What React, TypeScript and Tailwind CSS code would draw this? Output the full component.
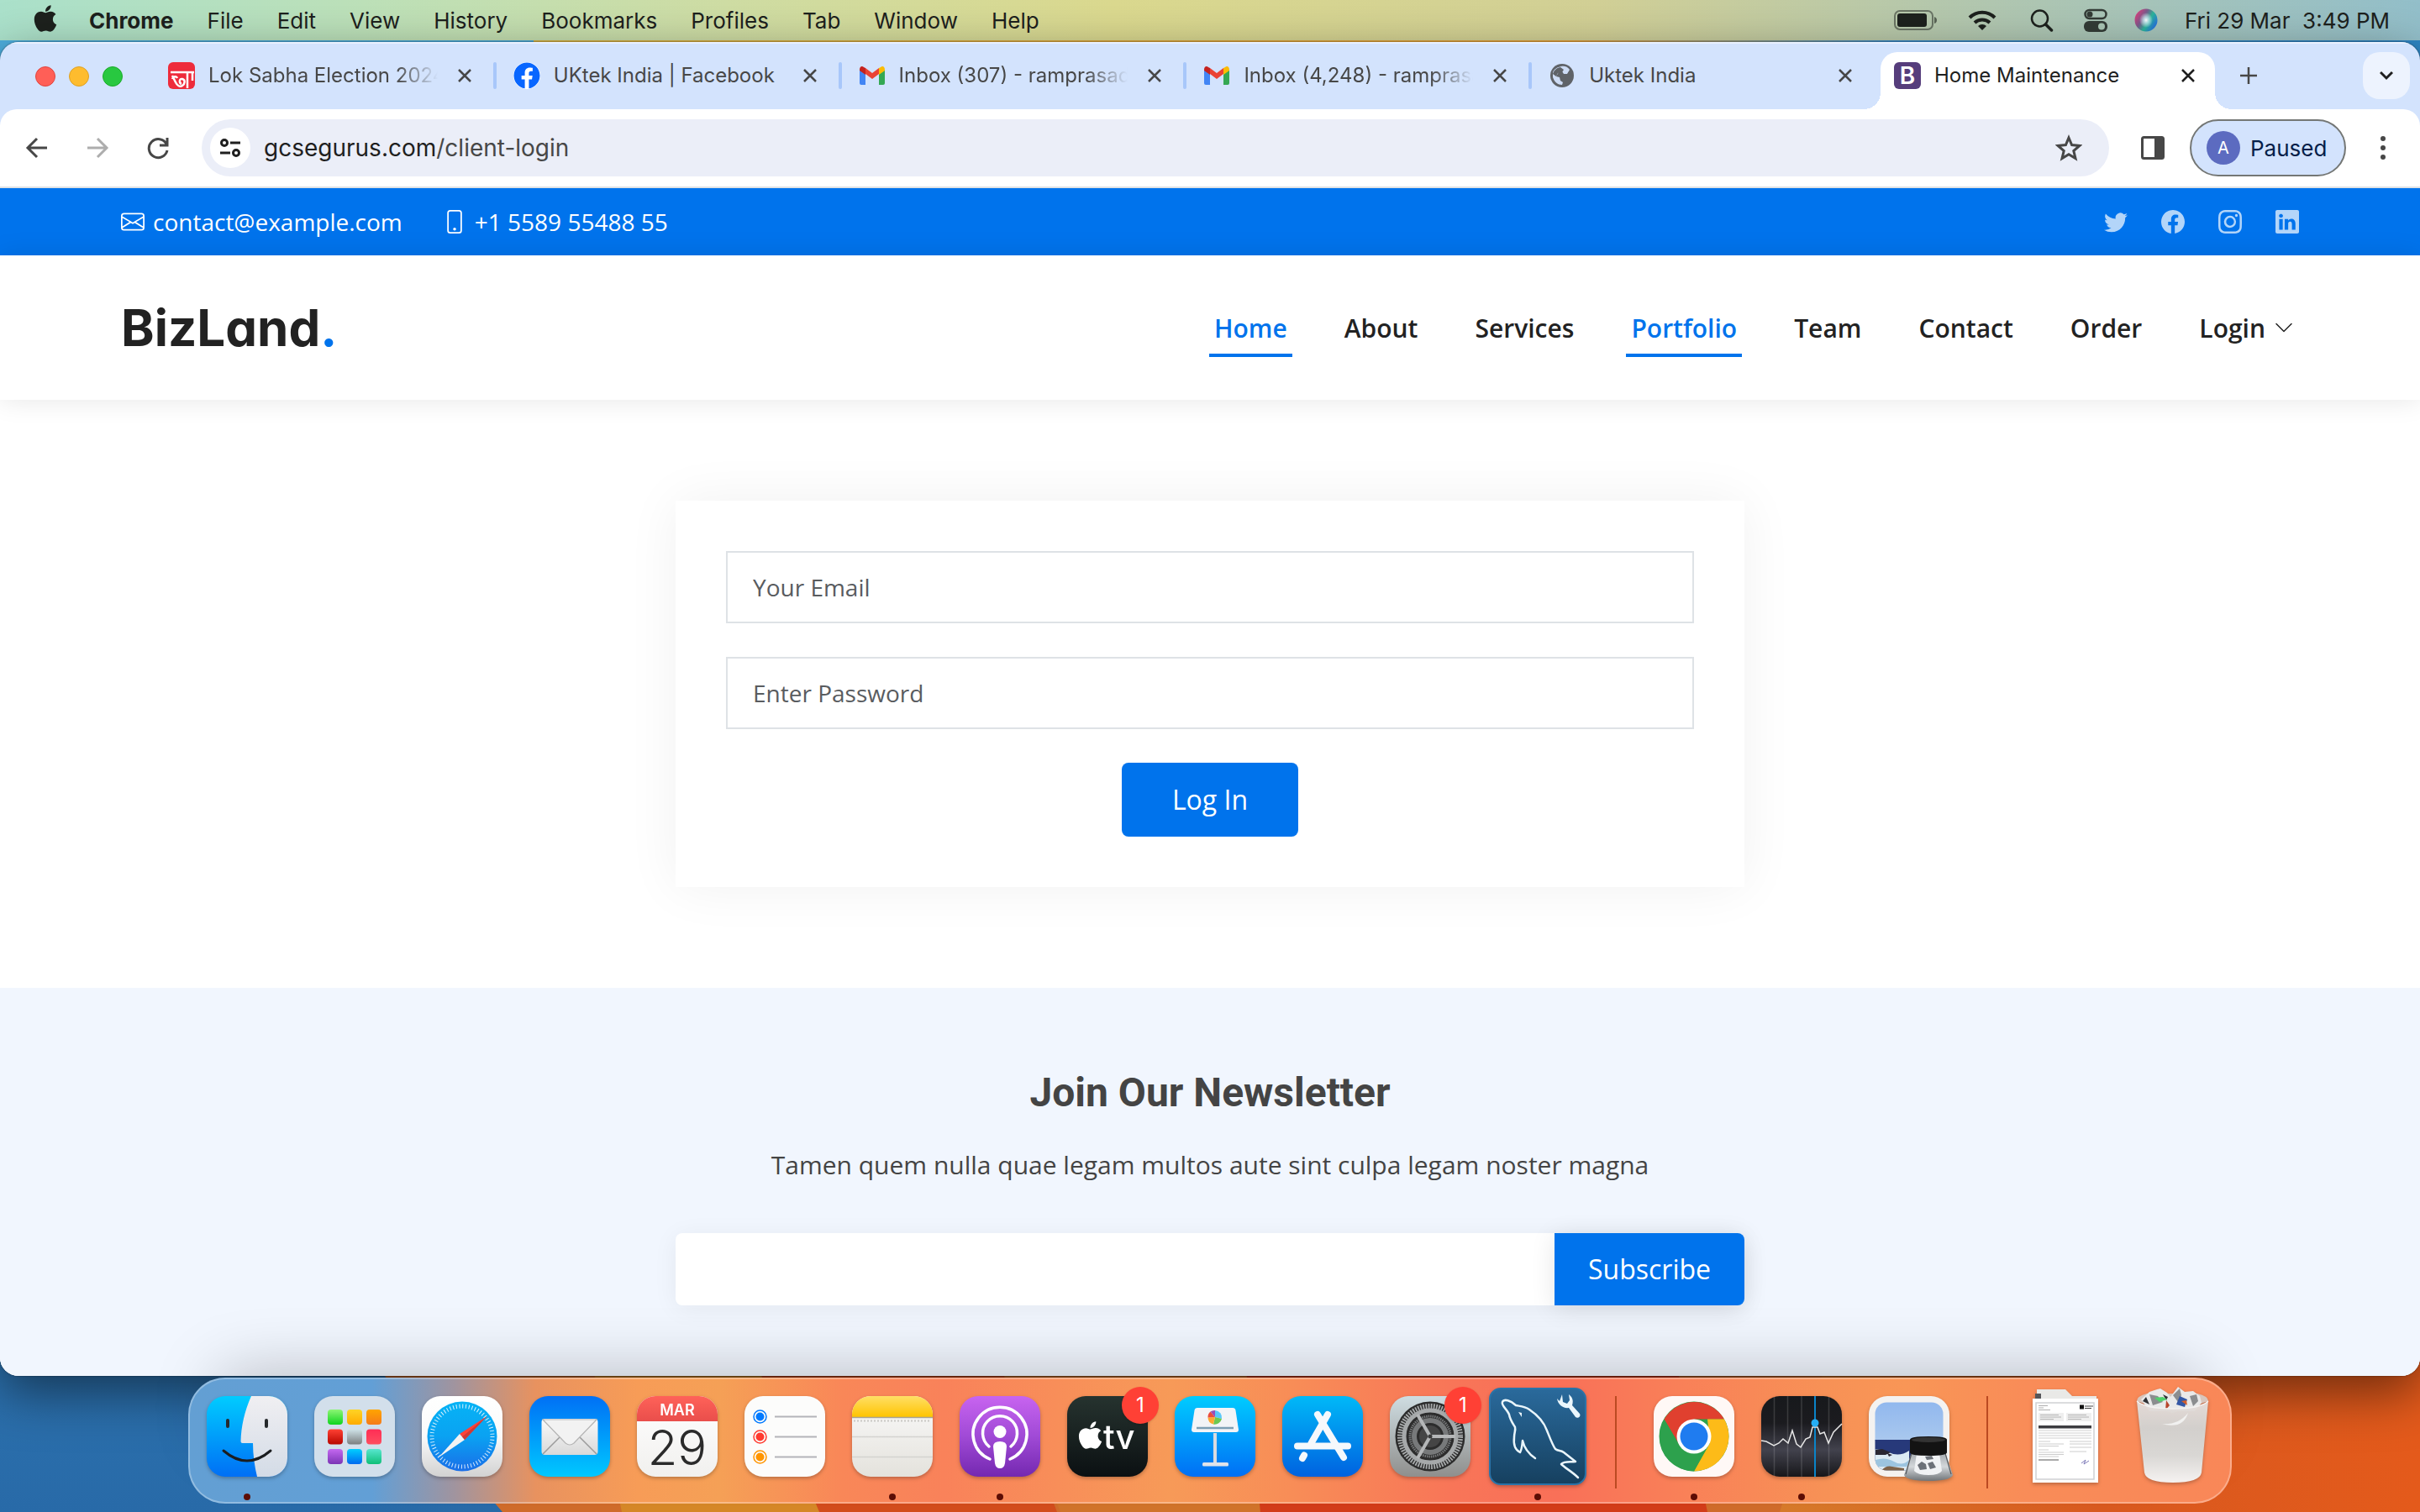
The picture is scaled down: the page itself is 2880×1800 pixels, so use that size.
import type { ReactNode } from "react";
import {
  BsChevronDown,
  BsEnvelope,
  BsFacebook,
  BsInstagram,
  BsLinkedin,
  BsPhone,
  BsTwitter,
} from "react-icons/bs";
import { FaApple, FaFacebook } from "react-icons/fa";

const menuItems = ["File", "Edit", "View", "History", "Bookmarks", "Profiles", "Tab", "Window", "Help"];

/* ---------- Wallpaper ---------- */

function Wallpaper() {
  return (
    <svg
      className="absolute inset-0 h-full w-full"
      viewBox="0 0 2880 1800"
      preserveAspectRatio="none"
      aria-hidden="true"
    >
      <defs>
        <linearGradient id="wpBlue" x1="0" y1="0" x2="0" y2="1">
          <stop offset="0" stopColor="#4fb0df" />
          <stop offset="1" stopColor="#286aa8" />
        </linearGradient>
        <linearGradient id="wpTop" x1="0" y1="0" x2="1" y2="0">
          <stop offset="0" stopColor="#d9b545" />
          <stop offset="0.55" stopColor="#e8a33a" />
          <stop offset="0.72" stopColor="#3f8fcb" />
          <stop offset="1" stopColor="#2f86c4" />
        </linearGradient>
        <linearGradient id="wpRight" x1="0" y1="0" x2="1" y2="0">
          <stop offset="0" stopColor="#d67a2a" />
          <stop offset="0.5" stopColor="#d8591f" />
          <stop offset="1" stopColor="#e45a1b" />
        </linearGradient>
      </defs>
      <rect width="2880" height="1800" fill="url(#wpBlue)" />
      <rect x="635" y="0" width="2245" height="400" fill="url(#wpTop)" />
      <polygon points="425,1600 2880,1600 2880,1800 598,1800" fill="#cf6b2a" />
      <polygon points="890,1600 1180,1600 1258,1800 975,1800" fill="#d24c1c" />
      <polygon points="700,1600 890,1600 975,1800 740,1800" fill="#d58727" />
      <polygon points="1180,1600 1480,1600 1500,1800 1262,1800" fill="#d0732a" />
      <polygon points="1480,1600 1990,1600 2032,1800 1500,1800" fill="#d23c19" />
      <polygon points="2180,1600 2880,1600 2880,1800 2118,1800" fill="url(#wpRight)" />
    </svg>
  );
}

/* ---------- Menu bar ---------- */

function MenuBar() {
  return (
    <header className="relative flex h-12 items-center bg-[linear-gradient(90deg,#abe1cb_0%,#bde1b9_15%,#cfdda4_30%,#dbd98f_46%,#d2d096_66%,#b5c8ad_80%,#93bfca_100%)] pr-9 pl-9 text-[26px] text-[#1d211d]">
      <button aria-label="Apple menu" className="mb-1">
        <FaApple className="size-9" />
      </button>
      <nav className="ml-[34px] flex items-center gap-10">
        <button className="font-bold">Chrome</button>
        {menuItems.map((item) => (
          <button key={item}>{item}</button>
        ))}
      </nav>
      <div className="ml-auto flex items-center">
        <svg className="h-6 w-[52px]" viewBox="0 0 52 24" aria-label="Battery">
          <rect x="1" y="1" width="45" height="22" rx="6" fill="none" stroke="#1d211d" strokeOpacity="0.5" strokeWidth="2" />
          <rect x="4" y="4" width="35" height="16" rx="3" fill="#1d211d" />
          <path d="M48 8q3 1 3 4t-3 4z" fill="#1d211d" fillOpacity="0.6" />
        </svg>
        <svg className="ml-9 h-[26px] w-[34px]" viewBox="0 0 34 26" aria-label="Wi-Fi">
          <g fill="none" stroke="#1d211d" strokeWidth="4">
            <path d="M2 10a21 21 0 0 1 30 0" />
            <path d="M8 16a13 13 0 0 1 18 0" />
          </g>
          <path d="M17 25l-5-5a7 7 0 0 1 10 0z" fill="#1d211d" />
        </svg>
        <svg className="ml-10 size-7" viewBox="0 0 28 28" aria-label="Spotlight">
          <circle cx="11.500" cy="12" r="9.500" fill="none" stroke="#1d211d" strokeWidth="2.500" />
          <path d="M18.500 19l7 7" stroke="#1d211d" strokeWidth="3.500" strokeLinecap="round" />
        </svg>
        <svg className="ml-9 h-7 w-7" viewBox="0 0 28 28" aria-label="Control Centre">
          <rect x="1.500" y="2" width="25" height="10" rx="5" fill="none" stroke="#333b36" strokeWidth="2.500" />
          <circle cx="7" cy="7" r="3.500" fill="#333b36" />
          <rect x="0" y="15" width="28" height="13" rx="6" fill="#333b36" />
          <circle cx="21" cy="21.500" r="4" fill="#aac6b5" />
        </svg>
        <svg className="ml-8 size-7" viewBox="0 0 28 28" aria-label="Siri">
          <defs>
            <linearGradient id="siri" x1="0" y1="0.200" x2="1" y2="0.800">
              <stop offset="0" stopColor="#e23c7c" />
              <stop offset="0.350" stopColor="#7b5a8c" />
              <stop offset="0.600" stopColor="#2bb59a" />
              <stop offset="1" stopColor="#2563eb" />
            </linearGradient>
            <radialGradient id="siriGlow">
              <stop offset="0" stopColor="#fff" />
              <stop offset="0.400" stopColor="#d8f6ff" stopOpacity="0.700" />
              <stop offset="1" stopColor="#fff" stopOpacity="0" />
            </radialGradient>
          </defs>
          <circle cx="14" cy="14" r="13.500" fill="url(#siri)" />
          <ellipse cx="14" cy="14" rx="8" ry="9" fill="url(#siriGlow)" />
        </svg>
        <time className="ml-8 whitespace-pre">Fri 29 Mar  3:49 PM</time>
      </div>
    </header>
  );
}

/* ---------- Browser chrome ---------- */

function GmailIcon() {
  return (
    <svg className="h-[22px] w-8" viewBox="0 0 30 22">
      <path d="M0 4v16a2 2 0 0 0 2 2h5V9z" fill="#4285f4" />
      <path d="M30 4v16a2 2 0 0 1-2 2h-5V9z" fill="#34a853" />
      <path d="M7 9l8 6 8-6V2l-8 6-8-6z" fill="#ea4335" />
      <path d="M0 4v1l7 5V2L5 1C3-1 0 0 0 4z" fill="#c5221f" />
      <path d="M30 4v1l-7 5V2l2-1c2-2 5-1 5 3z" fill="#fbbc04" />
    </svg>
  );
}

function NewsIcon() {
  return (
    <svg className="size-8" viewBox="0 0 32 32">
      <rect width="32" height="32" rx="6" fill="#ee2b3b" />
      <path d="M3 12h28M23 12v19M29 12v10" stroke="#fff" strokeWidth="2.500" fill="none" />
      <path d="M5 16l4 8c2 4 5 6 8 4s4-7 0-8-4 5-1 6M5 20c1-3 5-4 6-1" stroke="#fff" strokeWidth="2.500" fill="none" />
    </svg>
  );
}

function GlobeIcon() {
  return (
    <svg className="size-8" viewBox="0 0 32 32">
      <circle cx="16" cy="16" r="14" fill="#5f6368" />
      <path d="M15 5c3-1 8 0 10 4l-3 5h-4l-2-3-4 1-3 5 4 1 1 4 3 2-1 3c-5 0-9-3-11-9V12c2-4 5-6 10-7z" fill="#d3e3fd" opacity="0.950" />
      <path d="M14 6l4 3-2 3-5 1-2 4-4-3c1-4 4-7 9-8zM20 15l7-1c1 6-2 10-6 12l-2-4 2-3z" fill="#5f6368" />
    </svg>
  );
}

function CloseIcon() {
  return (
    <svg className="size-4" viewBox="0 0 16 16" stroke="currentColor" strokeWidth="2.500">
      <path d="M1 1l14 14M15 1L1 15" />
    </svg>
  );
}

const tabs: { title: string; icon: ReactNode; fade?: boolean }[] = [
  { title: "Lok Sabha Election 2024", icon: <NewsIcon />, fade: true },
  {
    title: "UKtek India | Facebook",
    icon: <FaFacebook className="size-8 rounded-full bg-white text-[#0866ff]" />,
  },
  { title: "Inbox (307) - ramprasad", icon: <GmailIcon />, fade: true },
  { title: "Inbox (4,248) - ramprasad", icon: <GmailIcon />, fade: true },
  { title: "Uktek India", icon: <GlobeIcon /> },
];

function TabStrip() {
  return (
    <div className="flex h-20 pl-[42px] text-2xl text-[#474747] shadow-[inset_0_2px_0_#e9f1fe]">
      <div className="flex w-[136px] items-center gap-4 pt-0.5">
        <button aria-label="Close window" className="size-6 rounded-full border border-[#e0443e] bg-[#ff5f57]" />
        <button aria-label="Minimise window" className="size-6 rounded-full border border-[#dea123] bg-[#febc2e]" />
        <button aria-label="Zoom window" className="size-6 rounded-full border border-[#1aab29] bg-[#28c840]" />
      </div>
      {tabs.map((tab, index) => (
        <div key={tab.title} className="relative flex min-w-0 flex-1 items-center pr-7 pl-[22px]">
          <span className="shrink-0">{tab.icon}</span>
          <span
            className={`ml-4 min-w-0 flex-1 whitespace-nowrap ${
              tab.fade ? "mr-6 overflow-hidden [mask-image:linear-gradient(90deg,#000_calc(100%-50px),transparent)]" : "mr-4"
            }`}
          >
            {tab.title}
          </span>
          <button aria-label={`Close ${tab.title}`}>
            <CloseIcon />
          </button>
          {index < tabs.length - 1 && <span className="absolute -right-0.5 h-8 w-1 rounded-sm bg-[#a8c7fa]" />}
        </div>
      ))}
      <div className="relative mt-3 ml-1.5 flex w-[398px] items-center rounded-t-[20px] bg-white pr-6 pb-3 pl-4 text-[#1f1f1f] before:absolute before:bottom-0 before:-left-5 before:size-5 before:bg-[radial-gradient(circle_at_0_0,transparent_20px,white_20px)] after:absolute after:-right-5 after:bottom-0 after:size-5 after:bg-[radial-gradient(circle_at_100%_0,transparent_20px,white_20px)]">
        <span className="flex size-8 shrink-0 items-center justify-center rounded-md bg-[#563d7c] text-[28px] leading-8 font-semibold text-white">
          B
        </span>
        <span className="mr-6 ml-4 min-w-0 flex-1 whitespace-nowrap">Home Maintenance</span>
        <button aria-label="Close Home Maintenance">
          <CloseIcon />
        </button>
      </div>
      <div className="flex w-[244px] items-start justify-between pt-3 pr-3 pl-[30px]">
        <button aria-label="New tab" className="flex h-14 items-center">
          <svg className="size-5" viewBox="0 0 20 20" stroke="#474747" strokeWidth="2.500">
            <path d="M10 0v20M0 10h20" />
          </svg>
        </button>
        <button aria-label="Search tabs" className="flex size-14 items-center justify-center rounded-[20px] bg-[#edf3fe]">
          <svg className="h-3 w-4" viewBox="0 0 16 12" fill="none" stroke="#1f1f1f" strokeWidth="3">
            <path d="M1 2l7 7 7-7" />
          </svg>
        </button>
      </div>
    </div>
  );
}

function Toolbar() {
  return (
    <div className="flex h-[94px] items-center rounded-t-[20px] border-b-2 border-[#dfe1e5] bg-white pr-7 pl-[30px]">
      <div className="flex items-center gap-11">
        <button aria-label="Back">
          <svg className="size-7" viewBox="0 0 28 28" fill="none" stroke="#474747" strokeWidth="3">
            <path d="M26 14H4M14 3L3 14l11 11" />
          </svg>
        </button>
        <button aria-label="Forward">
          <svg className="size-7" viewBox="0 0 28 28" fill="none" stroke="#adadad" strokeWidth="3">
            <path d="M2 14h22M14 3l11 11-11 11" />
          </svg>
        </button>
        <button aria-label="Reload">
          <svg className="size-7" viewBox="0 0 28 28" fill="none" stroke="#474747" strokeWidth="3">
            <path d="M24 9.500A11 11 0 1 0 25 17M25 2v9h-9" />
          </svg>
        </button>
      </div>
      <div className="ml-[38px] flex h-[68px] min-w-0 flex-1 items-center rounded-full bg-[#ebeef8] pr-8 pl-2.5">
        <button aria-label="View site information" className="flex size-12 items-center justify-center rounded-full bg-white">
          <svg className="size-6" viewBox="0 0 24 24" fill="none" stroke="#1f1f1f" strokeWidth="3">
            <circle cx="5" cy="6" r="3.500" />
            <path d="M12 6h12M0 18h12" />
            <circle cx="19" cy="18" r="3.500" />
          </svg>
        </button>
        <div className="ml-4 flex-1 text-[28px] text-[#1f1f1f]">
          gcsegurus.com<span className="text-[#474747]">/client-login</span>
        </div>
        <button aria-label="Bookmark this tab">
          <svg className="size-8" viewBox="0 0 32 32" fill="none" stroke="#474747" strokeWidth="3">
            <path d="M16 4l3.600 8.600 9.300.800-7.100 6.100 2.200 9.100-8-4.900-8 4.900 2.200-9.100-7.100-6.100 9.300-.800z" />
          </svg>
        </button>
      </div>
      <button aria-label="Side panel" className="ml-[38px]">
        <svg className="size-7" viewBox="0 0 28 28">
          <rect x="1.500" y="1.500" width="25" height="25" rx="2" fill="none" stroke="#474747" strokeWidth="3" />
          <rect x="16" y="1" width="11" height="26" fill="#474747" />
        </svg>
      </button>
      <button className="ml-[30px] flex h-[68px] w-[186px] items-center gap-3 rounded-full border-2 border-[#747775] bg-[#d3e3fd] pl-[18px] text-[26px] text-[#041e49]">
        <span className="flex size-10 items-center justify-center rounded-full bg-[#5c6bc0] text-xl text-white">A</span>
        Paused
      </button>
      <button aria-label="Customise and control" className="ml-7 flex w-8 flex-col items-center gap-[5px]">
        <span className="size-1.5 rounded-full bg-[#474747]" />
        <span className="size-1.5 rounded-full bg-[#474747]" />
        <span className="size-1.5 rounded-full bg-[#474747]" />
      </button>
    </div>
  );
}

/* ---------- Web page ---------- */

const navLinks = ["Home", "About", "Services", "Portfolio", "Team", "Contact", "Order"];
const activeLinks = ["Home", "Portfolio"];

function TopBar() {
  return (
    <section className="flex h-20 items-center justify-between bg-[#0073ec] px-36 text-[28px] text-white">
      <div className="flex items-center">
        <BsEnvelope className="size-7" />
        <a href="mailto:contact@example.com" className="ml-2.5">
          contact@example.com
        </a>
        <BsPhone className="ml-12 size-7" />
        <span className="ml-2.5">+1 5589 55488 55</span>
      </div>
      <div className="flex items-center gap-10 text-white/70">
        <a href="#twitter" aria-label="Twitter"><BsTwitter /></a>
        <a href="#facebook" aria-label="Facebook"><BsFacebook /></a>
        <a href="#instagram" aria-label="Instagram"><BsInstagram /></a>
        <a href="#linkedin" aria-label="LinkedIn"><BsLinkedin /></a>
      </div>
    </section>
  );
}

function SiteHeader() {
  return (
    <div className="relative flex h-[172px] items-center justify-between bg-white px-36 shadow-[0_0_30px_rgba(0,0,0,0.1)]">
      <h1 className="font-['Inter'] text-[60px] font-bold text-[#222222] [font-feature-settings:'cv11']">
        <a href="#home">
          BizLand<span className="text-[#0073ec]">.</span>
        </a>
      </h1>
      <nav className="flex items-center gap-14 text-[30px] font-semibold text-[#222222]">
        {navLinks.map((link) => (
          <a
            key={link}
            href={`#${link.toLowerCase()}`}
            className={`flex h-[70px] items-center border-y-4 border-t-transparent px-1.5 ${
              activeLinks.includes(link) ? "border-b-[#0073ec] text-[#0073ec]" : "border-b-transparent"
            }`}
          >
            {link}
          </a>
        ))}
        <a href="#login" className="flex h-[70px] items-center gap-2.5 px-1.5">
          Login
          <BsChevronDown className="size-6" />
        </a>
      </nav>
    </div>
  );
}

function LoginForm() {
  return (
    <section className="flex justify-center py-[120px]">
      <form className="flex w-[1272px] flex-col items-center gap-10 bg-white p-[60px] shadow-[0_0_60px_rgba(0,0,0,0.06)]">
        <input
          type="email"
          aria-label="Your Email"
          placeholder="Your Email"
          className="h-[86px] w-full border-2 border-[#dee2e6] px-[30px] text-[28px] placeholder:text-[#595c5f]"
        />
        <input
          type="password"
          aria-label="Enter Password"
          placeholder="Enter Password"
          className="h-[86px] w-full border-2 border-[#dee2e6] px-[30px] text-[28px] placeholder:text-[#595c5f]"
        />
        <button type="button" className="h-[88px] w-[210px] rounded-lg bg-[#0073ec] text-[32px] text-white">
          Log In
        </button>
      </form>
    </section>
  );
}

function Newsletter() {
  return (
    <section className="flex flex-1 flex-col items-center bg-[#f1f6fe] pt-24 text-[#444444]">
      <h4 className="font-['Roboto'] text-[48px] leading-[58px] font-bold">Join Our Newsletter</h4>
      <p className="mt-[34px] text-[30px] leading-[46px]">
        Tamen quem nulla quae legam multos aute sint culpa legam noster magna
      </p>
      <form className="mt-[58px] flex h-[86px] w-[1272px] rounded-lg bg-white shadow-[0_4px_30px_rgba(0,0,0,0.06)]">
        <input type="email" aria-label="Newsletter email" className="min-w-0 flex-1 px-5 text-[28px]" />
        <button
          type="button"
          className="w-[226px] rounded-r-lg bg-[#0073ec] text-[32px] text-white shadow-[0_4px_30px_rgba(0,0,0,0.1)]"
        >
          Subscribe
        </button>
      </form>
    </section>
  );
}

/* ---------- Dock ---------- */

function DockItem({
  label,
  badge,
  running,
  children,
}: {
  label: string;
  badge?: string;
  running?: boolean;
  children: ReactNode;
}) {
  return (
    <button aria-label={label} className="relative size-24">
      <svg
        className="size-24 overflow-visible drop-shadow-[0_2px_2px_rgba(0,0,0,0.25)]"
        viewBox="0 0 96 96"
        aria-hidden="true"
      >
        {children}
      </svg>
      {badge && (
        <span className="absolute -top-[11px] -right-[13px] flex size-11 items-center justify-center rounded-full bg-[#ff4035] text-2xl text-white shadow-sm">
          {badge}
        </span>
      )}
      {running && <span className="absolute -bottom-7 left-11 size-2 rounded-full bg-[#5c0d05]" />}
    </button>
  );
}

function DockSeparator() {
  return (
    <div className="flex w-[26px] justify-center">
      <div className="h-[110px] w-0.5 bg-[#bb4a22]" />
    </div>
  );
}

function Gradient({ id, stops }: { id: string; stops: string[] }) {
  return (
    <linearGradient id={id} x1="0" y1="0" x2="0" y2="1">
      {stops.map((color, i) => (
        <stop key={i} offset={i / (stops.length - 1)} stopColor={color} />
      ))}
    </linearGradient>
  );
}

const launchpadTiles = [
  ["#8df575", "#0fd41e"],
  ["#ffd426", "#ffab00"],
  ["#ffa500", "#f57a1a"],
  ["#ff4133", "#b80600"],
  ["#cfe3e8", "#7b7f80"],
  ["#ff2d55", "#ff4d60"],
  ["#c468f0", "#7b35b5"],
  ["#00cfff", "#006af0"],
  ["#58e6cf", "#0fbf78"],
];

function Dock() {
  return (
    <footer className="relative z-10 mx-auto mt-0.5 mb-2.5 flex h-[150px] items-start gap-8 rounded-[44px] border-2 border-white/30 bg-[linear-gradient(90deg,#639fd3_0%,#629fd6_9%,#a0949f_13%,#e8925f_17%,#f79c57_22%,#f5a056_26%,#f98758_32%,#f9825a_37%,#f79a58_48%,#f88d57_54%,#f87558_62%,#f97058_67%,#f98058_73%,#f79156_80%,#f99656_84%,#f98c58_90%,#f98758_100%)] bg-clip-border bg-origin-border px-5 pt-5 shadow-[0_-40px_80px_-40px_rgba(0,0,0,0.28)]">
      <DockItem label="Finder" running>
        <defs>
          <Gradient id="finder" stops={["#00ccff", "#006ff5"]} />
          <Gradient id="finderFace" stops={["#f0eff2", "#d3dbe6"]} />
          <clipPath id="finderClip">
            <rect width="96" height="96" rx="22" />
          </clipPath>
        </defs>
        <g clipPath="url(#finderClip)">
          <rect width="96" height="96" fill="url(#finder)" />
          <path d="M53 0C45 18 41 36 40.500 54q0 2 2 2h12.500C55 70 57 84 60 96h36V0z" fill="url(#finderFace)" />
        </g>
        <path d="M25 29v7M71 29v7" stroke="#26292c" strokeWidth="4" strokeLinecap="round" />
        <path d="M20 65q28 24 56 0" fill="none" stroke="#1b1d20" strokeWidth="3" strokeLinecap="round" />
      </DockItem>

      <DockItem label="Launchpad">
        <rect width="96" height="96" rx="22" fill="#d2dfeb" />
        {launchpadTiles.map((stops, i) => (
          <g key={i}>
            <defs>
              <Gradient id={`tile${i}`} stops={stops} />
            </defs>
            <rect x={16 + (i % 3) * 23} y={16 + Math.floor(i / 3) * 23.5} width="18" height="18" rx="4" fill={`url(#tile${i})`} />
          </g>
        ))}
      </DockItem>

      <DockItem label="Safari">
        <defs>
          <Gradient id="safariBg" stops={["#ffffff", "#fafafa", "#d2d2d2"]} />
          <Gradient id="safari" stops={["#06b3f5", "#0aa2f2", "#1a6ee8"]} />
        </defs>
        <rect width="96" height="96" rx="22" fill="url(#safariBg)" />
        <circle cx="48" cy="48" r="41.500" fill="url(#safari)" />
        <circle cx="48" cy="48" r="36" fill="none" stroke="#fff" strokeOpacity="0.850" strokeWidth="5" strokeDasharray="1 2.770" />
        <path d="M77.500 24L51 52l-6-7z" fill="#ff4338" />
        <path d="M20 73l25-28 6 7z" fill="#f3f3f3" />
        <path d="M77.500 24L51 52l-3-3.500z" fill="#cf3a35" />
      </DockItem>

      <DockItem label="Mail">
        <defs>
          <Gradient id="mail" stops={["#0070f5", "#00c8ff"]} />
          <Gradient id="envelope" stops={["#fafafa", "#d9d9d9"]} />
        </defs>
        <rect width="96" height="96" rx="22" fill="url(#mail)" />
        <rect x="14.500" y="27" width="67" height="43" rx="4" fill="url(#envelope)" />
        <path d="M16 69l20-20M80 69L60 49" stroke="#9b9b9b" strokeWidth="1.500" />
        <path d="M16 28l27 28q5 4 10 0l27-28z" fill="#f2f2f2" stroke="#b5b5b5" strokeWidth="1.200" />
      </DockItem>

      <DockItem label="Calendar">
        <defs>
          <Gradient id="calendar" stops={["#ffffff", "#f1f0ee"]} />
          <Gradient id="calendarTop" stops={["#ff6259", "#e94e4b"]} />
        </defs>
        <rect width="96" height="96" rx="22" fill="url(#calendar)" />
        <path d="M0 30v-8A22 22 0 0 1 22 0h52a22 22 0 0 1 22 22v8z" fill="url(#calendarTop)" />
        <text x="48" y="23" textAnchor="middle" fontSize="18" fontWeight="600" fill="#fff">
          MAR
        </text>
        <text x="48" y="82" textAnchor="middle" fontSize="58" fontWeight="300" fill="#2b2b2b">
          29
        </text>
      </DockItem>

      <DockItem label="Reminders">
        <rect width="96" height="96" rx="22" fill="#fcfcfb" />
        {["#007aff", "#ff3b30", "#ff9500"].map((color, i) => (
          <g key={color} transform={`translate(0 ${24.5 + i * 24})`}>
            <circle cx="18.500" r="7.500" fill="none" stroke={color} strokeWidth="1.500" />
            <circle cx="18.500" r="5" fill={color} />
            <path d="M36 0h50" stroke="#b4b4b9" strokeWidth="2" />
          </g>
        ))}
      </DockItem>

      <DockItem label="Notes" running>
        <defs>
          <Gradient id="notes" stops={["#fafafa", "#e4e2dc"]} />
          <Gradient id="notesTop" stops={["#ffdf66", "#ffc400"]} />
        </defs>
        <rect width="96" height="96" rx="22" fill="url(#notes)" />
        <path d="M0 25v-3A22 22 0 0 1 22 0h52a22 22 0 0 1 22 22v3z" fill="url(#notesTop)" />
        <path d="M0 25.500h96" stroke="#a8a494" strokeWidth="1.500" />
        <path d="M2 29.500h92" stroke="#c9c8c4" strokeWidth="2" strokeDasharray="2 2" />
        <path d="M0 48.500h96M0 72.500h96" stroke="#d4d3d0" strokeWidth="1.500" />
      </DockItem>

      <DockItem label="Podcasts" running>
        <defs>
          <Gradient id="podcasts" stops={["#c864f0", "#a04ad6", "#7428b0"]} />
        </defs>
        <rect width="96" height="96" rx="22" fill="url(#podcasts)" />
        <g fill="none" stroke="#fff" strokeWidth="3.500" strokeLinecap="round">
          <path d="M36 75a32 32 0 1 1 24 0" />
          <path d="M35 60a20.500 20.500 0 1 1 26 0" />
        </g>
        <circle cx="48" cy="42.500" r="7.500" fill="#fff" />
        <path d="M40 60q0-6 8-6t8 6l-2 20q-1 6-6 6t-6-6z" fill="#fff" />
      </DockItem>

      <DockItem label="TV" badge="1">
        <defs>
          <Gradient id="tv" stops={["#26332f", "#0b1012"]} />
        </defs>
        <rect width="96" height="96" rx="22" fill="url(#tv)" />
        <FaApple x="9" y="28" size={37} color="#fff" />
        <text x="43" y="63" fontSize="40" fontWeight="500" fill="#fff">
          tv
        </text>
      </DockItem>

      <DockItem label="Keynote">
        <defs>
          <Gradient id="keynote" stops={["#00ccff", "#006ff5"]} />
        </defs>
        <rect width="96" height="96" rx="22" fill="url(#keynote)" />
        <path d="M46 44h4v36h-4z" fill="#d8dbe0" />
        <rect x="33" y="79" width="31" height="4.500" rx="1.500" fill="#dfe3ea" />
        <path d="M27 14h42q3 0 3.500 3L76 40q0 3-3 3H23q-3 0-3-3l3.500-23q.5-3 3.500-3z" fill="#f2f4f7" />
        <path d="M26 38h44" stroke="#7d9fb5" strokeWidth="2.500" />
        <path d="M48 25V17a8.500 8.500 0 0 1 8 10z" fill="#5ac8fa" />
        <path d="M48 25l8 2a8.500 8.500 0 0 1-10 6.500z" fill="#6cc94f" />
        <path d="M48 25l-2 8.500a8.500 8.500 0 0 1-6.500-8z" fill="#fda831" />
        <path d="M48 25l-8.500.5a8.500 8.500 0 0 1 3-7z" fill="#ec4c3c" />
        <path d="M48 25l-5.500-6.500A8.500 8.500 0 0 1 48 17z" fill="#9a4db5" />
      </DockItem>

      <DockItem label="App Store">
        <defs>
          <Gradient id="appStore" stops={["#00b9f8", "#0062e0"]} />
        </defs>
        <rect width="96" height="96" rx="22" fill="url(#appStore)" />
        <g stroke="#f5f8fc" strokeWidth="8" strokeLinecap="round">
          <path d="M18 59.500h60" />
          <path d="M54 22L34.500 56" />
          <path d="M42 22l31 51" />
          <path d="M26 70.500l-2 3.500" />
        </g>
      </DockItem>

      <DockItem label="System Settings" badge="1">
        <defs>
          <Gradient id="settings" stops={["#cfdde2", "#8f8f8d"]} />
        </defs>
        <rect width="96" height="96" rx="22" fill="url(#settings)" />
        <circle cx="48" cy="48" r="41.500" fill="#2c2c2c" />
        <circle cx="48" cy="48" r="36" fill="none" stroke="#a6a9aa" strokeWidth="6" strokeDasharray="1.800 1.350" />
        <circle cx="48" cy="48" r="31" fill="none" stroke="#a6a9aa" strokeWidth="5" />
        <circle cx="48" cy="48" r="24" fill="none" stroke="#77797a" strokeWidth="3" strokeDasharray="1.500 1" />
        <circle cx="48" cy="48" r="19" fill="none" stroke="#77797a" strokeWidth="6" />
        <circle cx="48" cy="48" r="13" fill="#454545" />
        <path d="M48 48h30M48 48L33 22M48 48L33 74" stroke="#b5b7b8" strokeWidth="4" />
        <circle cx="48" cy="48" r="2.500" fill="#3a3a3a" />
      </DockItem>

      <DockItem label="MySQL Workbench" running>
        <defs>
          <Gradient id="workbench" stops={["#2a6a9c", "#16405f"]} />
        </defs>
        <g transform="translate(-10 -10)">
          <rect x="1" y="1" width="114" height="114" rx="13" fill="url(#workbench)" stroke="#2a73a8" strokeWidth="2" />
          <path
            d="M55 84Q43 76 40 63q-1 11-3 14c-6-3-8-10-7-18 0-6 2-8 1-12-3-5-6-9-7-15-2-6-10-11-8-15s10-2 16 4c4 1 10 1 16 5 9 6 17 14 21 25 4 10 7 18 10 22 4 3 6 1 10 4l14 11c-6 1-13-1-17 3 5 5 13 9 20 16"
            fill="none"
            stroke="#eaf6fc"
            strokeWidth="2.500"
            strokeLinecap="round"
            strokeLinejoin="round"
          />
          <path d="M35 29l4 1v5z" fill="#eaf6fc" />
          <path d="M87 8l1 9 5 2 3-4-1-7c4 3 6 7 4 13l9 10c2 4-3 6-5 4l-8-11c-7 1-13-4-14-11l3 3z" fill="#eaf6fc" />
        </g>
      </DockItem>

      <DockSeparator />

      <DockItem label="Google Chrome" running>
        <rect width="96" height="96" rx="22" fill="#fff8f6" />
        <circle cx="48" cy="48" r="41.500" fill="#2da14d" />
        <path d="M12.500 27.500A41.500 41.500 0 0 1 84 27.500H48L28 49z" fill="#e0402f" />
        <path d="M84 27.500A41.500 41.500 0 0 1 48 89.500L67 56l-3-28.500z" fill="#fdbb18" />
        <path d="M12.500 27.500L31 59 48 47V27.500z" fill="#e0402f" />
        <path d="M12.500 27.500L31 59l17 9 17-10-17 31.500A41.500 41.500 0 0 1 12.500 27.500z" fill="#2da14d" />
        <circle cx="48" cy="48" r="20.500" fill="#fff" />
        <circle cx="48" cy="48" r="16.500" fill="#1f7cf0" />
      </DockItem>

      <DockItem label="Stocks" running>
        <defs>
          <Gradient id="stocks" stops={["#17191c", "#1b1b1f", "#42424d", "#17171a"]} />
        </defs>
        <rect width="96" height="96" rx="22" fill="url(#stocks)" />
        <path d="M15.500 1v94M31.500 0v96M48 0v96M80.500 1v94" stroke="#fff" strokeOpacity="0.140" strokeWidth="1.500" />
        <path d="M64 0v96" stroke="#0a84c8" strokeWidth="2" />
        <path
          d="M0 53l6 1 9 5 6-3 5-5 6 5 5-15 5 16 5 4 6-10 5-2 3-12h6l3 8 5-2 5 13 6-13 10-10"
          fill="none"
          stroke="#e6e6e6"
          strokeWidth="1.500"
        />
        <circle cx="64" cy="32" r="4.500" fill="#26aef5" />
      </DockItem>

      <DockItem label="Preview">
        <defs>
          <Gradient id="sky" stops={["#8db5ee", "#a9c8ee"]} />
          <Gradient id="glass" stops={["#a3a9ae", "#d3d7da", "#6f7478"]} />
          <clipPath id="previewClip">
            <rect x="7.500" y="7.500" width="81" height="81" rx="14" />
          </clipPath>
        </defs>
        <rect width="96" height="96" rx="22" fill="#f4f2f0" />
        <g clipPath="url(#previewClip)">
          <rect width="96" height="53" fill="url(#sky)" />
          <rect y="52" width="96" height="44" fill="#27397a" />
          <path d="M0 65q12-4 24 2t24-2v32H0z" fill="#dbeaf4" />
          <path d="M8 64l8-1 10 4-6 3H8zM22 68l6 2-4 2z" fill="#2a2733" />
          <path d="M8 76q12-4 22 2t18-2v8H8z" fill="#9cc4df" />
          <path d="M14 90q6-8 14-6l14 2v6H14z" fill="#7d6249" />
        </g>
        <path d="M51 67h40l9 27q-3 7-29 7t-29-7z" fill="url(#glass)" />
        <path d="M57 68h27l3 21q-3 5-16 5t-17-5z" fill="#f0f2f4" />
        <path d="M51 68l-7 25M91 68l7 25" stroke="#55595d" strokeWidth="1.200" />
        <path d="M58 82l5-4 5 3 1 6-8 1zM70 80l6-2 4 7-7 2zM67 72l8-1 2 4-8 1z" fill="#6c7178" />
        <path d="M49 52q0-4 22-4t22 4v15q0 4-22 4t-22-4z" fill="#131313" />
        <ellipse cx="71" cy="52" rx="20" ry="3" fill="#333" />
      </DockItem>

      <DockSeparator />

      <DockItem label="Documents">
        <path d="M14-8h34l8 8h29v10H14z" fill="#e9e9e7" />
        <rect x="12" y="-3" width="7" height="10" fill="#55565a" />
        <rect x="9" y="3" width="78" height="100" fill="#fff" />
        <rect x="13" y="8" width="69" height="91" fill="none" stroke="#cfd1d3" strokeWidth="1.500" />
        <rect x="65" y="10.500" width="5" height="5" fill="#111" />
        <path d="M71 12h10M71 14.500h8" stroke="#444" strokeWidth="1.200" />
        <path d="M16 11.500h11M16 14h6M16 16.500h14" stroke="#9a9a9a" strokeWidth="0.800" />
        <path d="M16 20h30v10H16zM49 20h30v10H49z" fill="#efefef" />
        <path d="M18 22.500h22M18 25h25M18 27.500h16M51 22.500h22M51 25h25M51 27.500h16" stroke="#a5a5a5" strokeWidth="0.800" />
        <rect x="16" y="35" width="63" height="3.500" fill="#3c3c40" />
        <path d="M16 41h63M16 44h63M16 47h63M16 50h63" stroke="#cbcbcb" strokeWidth="0.900" />
        <path d="M16 54h14M16 57h30M16 59.500h24M16 64h12M16 67h30M16 69.500h30M16 72h24M53 54h26M53 57h26M53 61h26M53 66h20" stroke="#c0c0c0" strokeWidth="0.800" />
        <path d="M16 76h24" stroke="#555" strokeWidth="1" />
        <path d="M67 80l5-4-2 5 6-4" fill="none" stroke="#7d79b8" strokeWidth="1" />
      </DockItem>

      <DockItem label="Bin">
        <defs>
          <Gradient id="bin" stops={["#e6dedb", "#d3d3d1", "#dadbd9", "#f7f7f7"]} />
        </defs>
        <path d="M5 6q0-6 12-9h60q13 3 13 9L47 20z" fill="#d8c6bd" />
        <path d="M10 4l10-9 9-3 4-1 8 5 4 5 9-12 8 6 10-1 8 6 2 8-8 10H20z" fill="#e9e9e9" />
        <path d="M20-2l10 2 6 7-12 4zM48-1l8-8 2 8-4 8zM68 0l8-2 2 8-6 6z" fill="#8b8d8f" />
        <path d="M12 6l4-5 4 9zM36-2l6 3-2 4z" fill="#303236" />
        <path d="M56 0l9 4-3 9-10-3z" fill="#3457a5" />
        <path d="M58 6l6-1 1 6z" fill="#d5602b" />
        <path d="M26 2l10-1 5 3-9 3z" fill="#4fd06b" />
        <path d="M40 5l4 6-5 6z" fill="#b8452c" />
        <path d="M5 6q10 9 43 9t42-9l-8 85q-2 12-34 12T14 91z" fill="url(#bin)" fillOpacity="0.970" />
        <path d="M5 6q10 9 43 9t42-9" fill="none" stroke="#f4f2f1" strokeWidth="1.500" />
        <path d="M34 33q20 2 32-13-6 20-32 13z" fill="#f1f1f0" />
      </DockItem>
    </footer>
  );
}

export default function App() {
  return (
    <div className="relative flex min-h-screen flex-col overflow-hidden font-['Inter',sans-serif]">
      <Wallpaper />
      <MenuBar />
      <main className="relative mt-0.5 flex flex-1 flex-col overflow-hidden rounded-[22px] bg-[#d3e3fd] shadow-[0_20px_60px_rgba(0,0,0,0.5),0_0_2px_rgba(0,0,0,0.6)]">
        <TabStrip />
        <Toolbar />
        <div className="flex flex-1 flex-col bg-white font-['Open_Sans',sans-serif]">
          <TopBar />
          <SiteHeader />
          <LoginForm />
          <Newsletter />
        </div>
      </main>
      <Dock />
    </div>
  );
}
